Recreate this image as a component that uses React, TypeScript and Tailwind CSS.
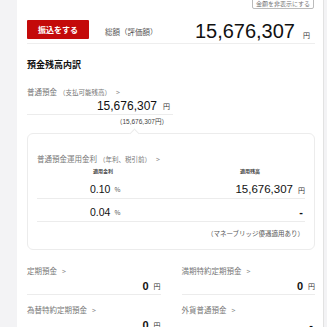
import React from 'react'

const jp = { fontFamily: '"Noto Sans CJK JP", "Noto Sans", sans-serif' }
const num = { fontFamily: '"Liberation Sans", Arial, "Noto Sans CJK JP", sans-serif' }

function Yen({ className = '' }: { className?: string }) {
  return <span className={`text-[7px] text-[#333] ml-[5px] ${className}`} style={jp}>円</span>
}

function Label({ children, sub }: { children: React.ReactNode; sub?: string }) {
  return (
    <div className="text-[7.5px] text-[#777] flex items-center gap-[5px]" style={jp}>
      <span>
        {children}
        {sub && <span className="text-[6.5px] ml-[2px]">{sub}</span>}
      </span>
      <span className="text-[7px] text-[#888]">&gt;</span>
    </div>
  )
}

function Cell({ label, value, top }: { label: string; value: React.ReactNode; top: string }) {
  return (
    <div className={`flex flex-col ${top}`}>
      <div className="h-[16px] flex items-center"><Label>{label}</Label></div>
      <div className="h-[16px] flex items-center justify-end border-b border-[#ececec]">{value}</div>
    </div>
  )
}

const Zero = () => (
  <>
    <span className="text-[11px] text-[#111] font-bold leading-none" style={num}>0</span>
    <Yen />
  </>
)

export default function App() {
  return (
    <div className="w-[327px] h-[327px] overflow-hidden bg-[#f3f3f5] flex">
      <div className="ml-[17px] w-[307px] h-full bg-white border-r border-[#e2e2e2] pl-[10px] pr-[8px] text-[#222]" style={jp}>
        {/* hide amounts */}
        <div className="flex justify-end h-[9px] pr-[1px]">
          <div className="mt-[-3px] h-[12px] w-[62px] border border-[#bbb] rounded-[2px] text-[6px] leading-none text-[#777] flex items-center justify-center pt-[2px]" style={jp}>
            金額を非表示にする
          </div>
        </div>

        {/* header */}
        <div className="mt-[11px] pb-[4px] border-b border-[#eee]">
          <div className="h-[19px] flex items-center">
            <button className="w-[62px] h-[19px] bg-[#c40a0a] text-white text-[8px] font-bold rounded-[1px]" style={jp}>振込をする</button>
            <span className="ml-[16px] text-[7.5px] text-[#555] mt-[5px]">総額（評価額）</span>
            <div className="ml-auto flex items-baseline pr-[5px] mt-[2px]">
              <span className="text-[20px] leading-none text-[#111]" style={num}>15,676,307</span>
              <Yen className="ml-[8px]" />
            </div>
          </div>
        </div>

        {/* breakdown */}
        <div className="mt-[15px] h-[12px] flex items-center text-[9px] font-bold text-[#111]">預金残高内訳</div>

        <div className="mt-[15px] h-[12px] flex items-center">
          <Label sub="（支払可能残高）">普通預金</Label>
        </div>
        <div className="w-[146px] h-[17px] flex items-center justify-end border-b border-[#ececec] pr-[3px]">
          <span className="text-[12px] leading-none text-[#111]" style={num}>15,676,307</span>
          <Yen className="ml-[6px]" />
        </div>
        <div className="w-[146px] flex justify-end pr-[5px] h-[14px] items-center">
          <span className="text-[6.5px] text-[#444]">（<span style={num}>15,676,307</span>円）</span>
        </div>

        {/* rate card */}
        <div className="relative mt-[4px] border border-[#ececec] rounded-[6px] h-[117px] px-[9px]">
          <div className="absolute top-[-4px] left-[103px] w-[7px] h-[7px] bg-white border-l border-t border-[#ececec] rotate-45" />
          <div className="mt-[19px] h-[12px] flex items-center">
            <Label sub="（年利、税引前）">普通預金運用金利</Label>
          </div>
          <div className="flex h-[11px] items-center text-[5px] text-[#444] font-bold">
            <span className="ml-[56px]">適用金利</span>
            <span className="ml-[127px]">適用残高</span>
          </div>
          <div className="mt-[5px] flex h-[18px] items-center border-b border-[#ececec]">
            <span className="ml-[53px] text-[10.5px] text-[#111] leading-none" style={num}>0.10</span>
            <span className="ml-[4px] text-[6.5px] text-[#555]">%</span>
            <div className="ml-auto flex items-baseline">
              <span className="text-[11.5px] text-[#111] leading-none" style={num}>15,676,307</span>
              <Yen className="ml-[4px]" />
            </div>
          </div>
          <div className="flex h-[23px] pt-[5px] items-center border-b border-[#ececec]">
            <span className="ml-[53px] text-[10.5px] text-[#111] leading-none" style={num}>0.04</span>
            <span className="ml-[4px] text-[6.5px] text-[#555]">%</span>
            <span className="ml-auto mr-[2px] text-[11px] text-[#111] font-bold" style={num}>-</span>
          </div>
          <div className="mt-[6px] h-[12px] flex items-center justify-end text-[6.5px] text-[#555] pr-[1px]">（マネーブリッジ優遇適用あり）</div>
        </div>

        {/* other deposits */}
        <div className="grid grid-cols-2 gap-x-[21px]">
          <Cell top="mt-[13px]" label="定期預金" value={<Zero />} />
          <Cell top="mt-[13px]" label="満期特約定期預金" value={<Zero />} />
          <Cell top="mt-[7px]" label="為替特約定期預金" value={<Zero />} />
          <Cell top="mt-[7px]" label="外貨普通預金" value={<span className="text-[11px] text-[#111] font-bold mr-[2px] leading-none" style={num}>-</span>} />
        </div>
      </div>
    </div>
  )
}
